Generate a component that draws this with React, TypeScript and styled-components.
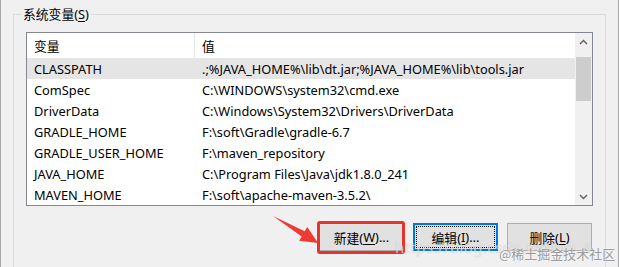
import React from "react";
import styled, { createGlobalStyle } from "styled-components";

interface EnvVar {
  name: string;
  value: string;
}

const vars: EnvVar[] = [
  { name: "CLASSPATH", value: ".;%JAVA_HOME%\\lib\\dt.jar;%JAVA_HOME%\\lib\\tools.jar" },
  { name: "ComSpec", value: "C:\\WINDOWS\\system32\\cmd.exe" },
  { name: "DriverData", value: "C:\\Windows\\System32\\Drivers\\DriverData" },
  { name: "GRADLE_HOME", value: "F:\\soft\\Gradle\\gradle-6.7" },
  { name: "GRADLE_USER_HOME", value: "F:\\maven_repository" },
  { name: "JAVA_HOME", value: "C:\\Program Files\\Java\\jdk1.8.0_241" },
  { name: "MAVEN_HOME", value: "F:\\soft\\apache-maven-3.5.2\\" },
];

const GlobalStyle = createGlobalStyle`
  html, body {
    margin: 0;
    padding: 0;
    background: #f0f0f0;
  }
  * {
    box-sizing: border-box;
  }
`;

const Window = styled.div`
  position: relative;
  width: 619px;
  height: 267px;
  overflow: hidden;
  background: #f0f0f0;
  border-left: 1px solid #a8a8a8;
  padding: 14px 0 0 12px;
  font-family: "Noto Sans", "Noto Sans CJK SC", sans-serif;
  font-size: 12.8px;
  color: #000;
  &::after {
    content: "";
    position: absolute;
    top: 0;
    bottom: 0;
    left: 617px;
    width: 1px;
    background: #a8a8a8;
  }
`;

const Group = styled.div`
  position: relative;
  width: 593px;
  height: 260px;
  border: 1px solid #dcdcdc;
  border-bottom: none;
  padding: 17px 12px 0 12px;
`;

const Legend = styled.div`
  position: absolute;
  top: -9px;
  left: 7px;
  padding: 0 2px;
  background: #f0f0f0;
  line-height: 16px;
  u {
    text-decoration: underline;
    text-underline-offset: 2px;
  }
`;

const ListBox = styled.div`
  display: flex;
  width: 567px;
  height: 174px;
  border: 1px solid #828790;
  background: #fff;
`;

const Table = styled.div`
  flex: 1;
  display: flex;
  flex-direction: column;
`;

const Row = styled.div<{ $header?: boolean; $selected?: boolean }>`
  display: grid;
  grid-template-columns: 168px 1fr;
  height: ${(p) => (p.$header ? 25 : 21)}px;
  align-items: center;
  background: ${(p) => (p.$selected ? "#e5e5e5" : "#fff")};
  white-space: nowrap;
`;

const Cell = styled.div<{ $divider?: boolean }>`
  height: 100%;
  display: flex;
  align-items: center;
  padding-left: 7px;
  border-right: ${(p) => (p.$divider ? "1px solid #e5e5e5" : "none")};
`;

const ScrollBar = styled.div`
  width: 17px;
  display: flex;
  flex-direction: column;
  background: #f0f0f0;
`;

const ScrollArrow = styled.div`
  height: 17px;
  display: flex;
  align-items: center;
  justify-content: center;
`;

const Track = styled.div`
  flex: 1;
  padding-top: 7px;
`;

const Thumb = styled.div`
  width: 15px;
  height: 44px;
  margin: 0 auto;
  background: #cdcdcd;
`;

const ButtonRow = styled.div`
  display: flex;
  justify-content: flex-end;
  gap: 9px;
  width: 567px;
  margin-top: 17px;
  padding-right: 1px;
`;

const Button = styled.div<{ $focused?: boolean }>`
  position: relative;
  width: 85px;
  height: 28px;
  display: flex;
  align-items: center;
  justify-content: center;
  background: #e1e1e1;
  border: 1px solid ${(p) => (p.$focused ? "#0078d7" : "#adadad")};
  box-shadow: ${(p) => (p.$focused ? "inset 0 0 0 1px #0078d7" : "none")};
  u {
    text-decoration: underline;
    text-underline-offset: 2px;
  }
  &::before {
    content: "";
    display: ${(p) => (p.$focused ? "block" : "none")};
    position: absolute;
    inset: 2px;
    border: 1px dotted #000;
  }
`;

const Highlight = styled.div`
  position: absolute;
  inset: -3px -2px -4px -3px;
  border: 3px solid #e8322e;
  border-radius: 3px;
`;

const Arrow = styled.svg`
  position: absolute;
  left: 268px;
  top: 210px;
`;

const UrlMark = styled.div`
  position: absolute;
  left: 394px;
  top: 237px;
  font-size: 15px;
  letter-spacing: 0.4px;
  color: rgba(255, 255, 255, 0.6);
  text-shadow: 0 0 1px rgba(110, 110, 110, 0.4);
  white-space: nowrap;
`;

const SiteMark = styled.div`
  position: absolute;
  left: 498px;
  top: 244px;
  font-family: "Noto Sans CJK SC", sans-serif;
  font-size: 13px;
  color: #9b9b9b;
  text-shadow: 0 0 2px #fff;
  white-space: nowrap;
`;

const Chevron: React.FC<{ up?: boolean }> = ({ up }) => (
  <svg width="9" height="6" viewBox="0 0 9 6">
    <path
      d={up ? "M1 5 L4.5 1.5 L8 5" : "M1 1 L4.5 4.5 L8 1"}
      fill="none"
      stroke="#606060"
      strokeWidth="1.4"
    />
  </svg>
);

const App: React.FC = () => {
  return (
    <Window>
      <GlobalStyle />
      <Group>
        <Legend>
          系统变量(<u>S</u>)
        </Legend>
        <ListBox>
          <Table>
            <Row $header>
              <Cell $divider>变量</Cell>
              <Cell>值</Cell>
            </Row>
            {vars.map((v, i) => (
              <Row key={v.name} $selected={i === 0}>
                <Cell>{v.name}</Cell>
                <Cell>{v.value}</Cell>
              </Row>
            ))}
          </Table>
          <ScrollBar>
            <ScrollArrow>
              <Chevron up />
            </ScrollArrow>
            <Track>
              <Thumb />
            </Track>
            <ScrollArrow>
              <Chevron />
            </ScrollArrow>
          </ScrollBar>
        </ListBox>
        <ButtonRow>
          <Button>
            新建(<u>W</u>)...
            <Highlight />
          </Button>
          <Button $focused>
            编辑(<u>I</u>)...
          </Button>
          <Button>
            删除(<u>L</u>)
          </Button>
        </ButtonRow>
      </Group>
      <Arrow width="54" height="36" viewBox="0 0 54 36">
        <polygon
          points="4,6 35.7,21.2 38.3,16.9 49,33 30.1,30.7 32.7,26.4"
          fill="#ec3b30"
        />
      </Arrow>
      <UrlMark>https://blog.csdn.net/qq_4</UrlMark>
      <SiteMark>@稀土掘金技术社区</SiteMark>
    </Window>
  );
};

export default App;
